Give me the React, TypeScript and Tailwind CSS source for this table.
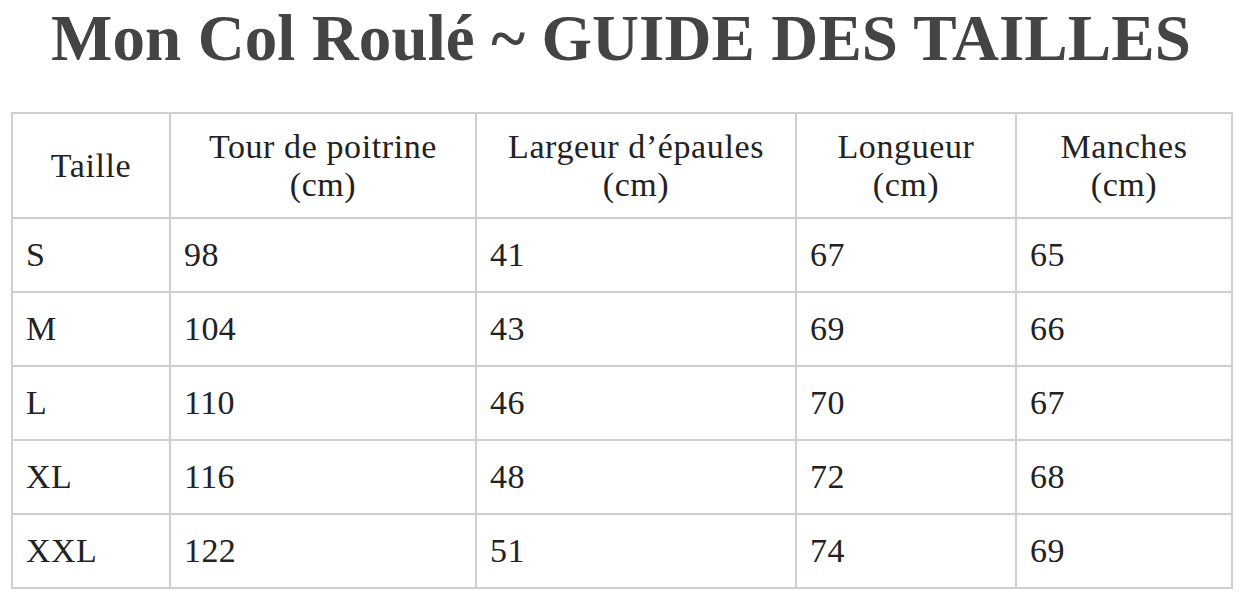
const headers = [
  ["Taille"],
  ["Tour de poitrine", "(cm)"],
  ["Largeur d’épaules", "(cm)"],
  ["Longueur", "(cm)"],
  ["Manches", "(cm)"],
];

const rows = [
  ["S", "98", "41", "67", "65"],
  ["M", "104", "43", "69", "66"],
  ["L", "110", "46", "70", "67"],
  ["XL", "116", "48", "72", "68"],
  ["XXL", "122", "51", "74", "69"],
];

const widths = ["w-[158px]", "w-[306px]", "w-[320px]", "w-[220px]", "w-[216px]"];

export default function App() {
  return (
    <div className="w-[1242px] h-[599px] bg-white overflow-hidden font-['Liberation_Serif',serif]">
      <h1 className="text-center text-[#444444] font-bold text-[65px] leading-[76px] tracking-[0.1px]">
        Mon Col Roulé ~ GUIDE DES TAILLES
      </h1>
      <div className="px-[11px] pt-[36px]">
        <table className="w-[1220px] table-fixed border-collapse border-2 border-[#cfcfcf] text-[#222222]">
          <colgroup>
            {widths.map((w, i) => (
              <col key={i} className={w} />
            ))}
          </colgroup>
          <thead>
            <tr className="h-[105px]">
              {headers.map((h, i) => (
                <th key={i} className="border-2 border-[#cfcfcf] font-normal text-[34px] leading-[38px] tracking-[0.6px] text-center align-middle">
                  {h.map((line, j) => (
                    <div key={j}>{line}</div>
                  ))}
                </th>
              ))}
            </tr>
          </thead>
          <tbody>
            {rows.map((r, i) => (
              <tr key={i} className="h-[74px]">
                {r.map((c, j) => (
                  <td key={j} className="border-2 border-[#cfcfcf] px-[13px] text-[34px] leading-[38px] tracking-[0.4px] align-middle">
                    {c}
                  </td>
                ))}
              </tr>
            ))}
          </tbody>
        </table>
      </div>
    </div>
  );
}
